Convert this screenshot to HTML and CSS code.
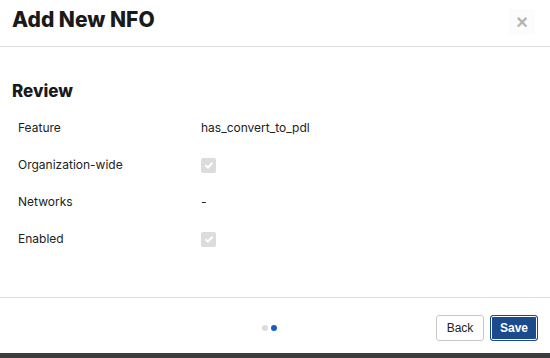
FILE: index.html
```html
<!DOCTYPE html>
<html lang="en">
<head>
    <meta charset="UTF-8">
    <title>Add New NFO</title>
    <link rel="stylesheet" href="styles.css">
</head>
<body>
    <div class="modal">
        <div class="modal-header">
            <h1>Add New NFO</h1>
            <button class="close">&times;</button>
        </div>
        <div class="modal-body">
            <h2>Review</h2>
            <table class="review">
                <tr>
                    <td class="label">Feature</td>
                    <td>has_convert_to_pdl</td>
                </tr>
                <tr>
                    <td class="label">Organization-wide</td>
                    <td><span class="check"><svg viewBox="0 0 14 14" width="14" height="14"><path d="M3.5 7.2 L6 9.5 L10.5 4.8" fill="none" stroke="#fff" stroke-width="2"/></svg></span></td>
                </tr>
                <tr>
                    <td class="label">Networks</td>
                    <td>-</td>
                </tr>
                <tr>
                    <td class="label">Enabled</td>
                    <td><span class="check"><svg viewBox="0 0 14 14" width="14" height="14"><path d="M3.5 7.2 L6 9.5 L10.5 4.8" fill="none" stroke="#fff" stroke-width="2"/></svg></span></td>
                </tr>
            </table>
        </div>
        <div class="modal-footer">
            <div class="dots">
                <span class="dot"></span>
                <span class="dot active"></span>
            </div>
            <div class="actions">
                <button class="btn">Back</button>
                <button class="btn primary">Save</button>
            </div>
        </div>
    </div>
    <div class="bottom-bar"></div>
</body>
</html>
```

FILE: styles.css
```css
body {
    margin: 0;
    font-family: Inter, "Noto Sans", sans-serif;
    color: #222;
    background-color: #fff;
}
.modal {
    height: 353px;
    display: flex;
    flex-direction: column;
}
.modal-header {
    height: 47px;
    box-sizing: border-box;
    border-bottom: 1px solid #e2e2e2;
    display: flex;
    justify-content: space-between;
    align-items: center;
    padding: 0 12px 8px 12px;
}
.modal-header h1 {
    margin: 0;
    font-size: 21px;
    font-weight: 800;
    letter-spacing: 0;
    color: #1a1a1a;
}
.close {
    border: none;
    background-color: #fcfcfc;
    color: #b4b4b4;
    font-size: 20px;
    font-weight: 700;
    line-height: 20px;
    width: 26px;
    height: 26px;
    padding: 0;
    margin-right: 3px;
    margin-top: 6px;
}
.modal-body {
    flex: 1;
    padding: 34px 12px 0 12px;
}
.modal-body h2 {
    margin: 0 0 8px 0;
    font-size: 17px;
    font-weight: 800;
    color: #1a1a1a;
}
.review {
    border-collapse: collapse;
}
.review td {
    height: 37px;
    padding: 0;
    font-size: 12px;
    color: #222;
    vertical-align: middle;
}
.review td.label {
    width: 183px;
    padding-left: 6px;
}
.check {
    display: inline-block;
    width: 15px;
    height: 15px;
    background-color: #dcdcdc;
    border-radius: 2px;
    vertical-align: middle;
}
.check svg {
    display: block;
    margin: 0.5px;
}
.modal-footer {
    height: 56px;
    box-sizing: border-box;
    border-top: 1px solid #e2e2e2;
    display: flex;
    align-items: center;
    justify-content: flex-end;
    position: relative;
    padding: 4px 12px 0 0;
}
.dots {
    position: absolute;
    left: 262px;
    top: 27px;
    display: flex;
    gap: 3px;
}
.dot {
    width: 6px;
    height: 6px;
    border-radius: 50%;
    background-color: #dcdcdc;
}
.dot.active {
    background-color: #1a5cc4;
}
.actions {
    display: flex;
    gap: 6px;
}
.btn {
    font-family: "Liberation Sans", Arial, sans-serif;
    font-size: 12px;
    height: 26px;
    width: 48px;
    padding: 0;
    border: 1px solid #c8c8c8;
    border-radius: 3px;
    background-color: #fff;
    color: #222;
}
.btn.primary {
    background-color: #1b4b8c;
    border-color: #1b4b8c;
    color: #fff;
    font-weight: 700;
    box-shadow: inset 0 0 0 1px #fff;
}
.bottom-bar {
    height: 5px;
    background-color: #3d3d3d;
}
```
